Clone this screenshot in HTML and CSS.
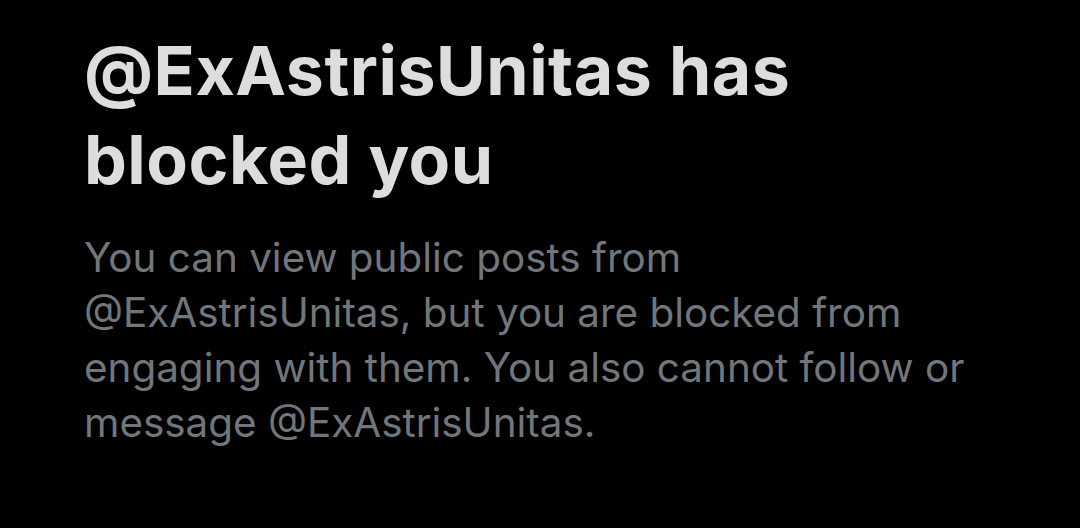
FILE: index.html
```html
<!DOCTYPE html>
<html lang="en">
<head>
<meta charset="utf-8">
<title>Blocked</title>
<link rel="stylesheet" href="styles.css">
</head>
<body>
<main class="blocked">
  <h1 class="blocked-title">@ExAstrisUnitas has blocked you</h1>
  <p class="blocked-text">You can view public posts from @ExAstrisUnitas, but you are blocked from engaging with them. You also cannot follow or message @ExAstrisUnitas.</p>
</main>
</body>
</html>
```

FILE: styles.css
```css
html, body {
  margin: 0;
  padding: 0;
  background: #000;
}
body {
  width: 1080px;
  height: 528px;
  overflow: hidden;
  font-family: Inter, "Noto Sans", sans-serif;
}
.blocked {
  padding: 26px 80px 0 84px;
  display: flex;
  flex-direction: column;
  gap: 26px;
}
.blocked-title {
  margin: 0;
  font-size: 68px;
  line-height: 89px;
  font-weight: 700;
  letter-spacing: 0.5px;
  color: #dcdddd;
  max-width: 780px;
}
.blocked-text {
  margin: 0;
  font-size: 40.4px;
  line-height: 55px;
  font-weight: 400;
  color: #71767b;
  max-width: 920px;
}
```
